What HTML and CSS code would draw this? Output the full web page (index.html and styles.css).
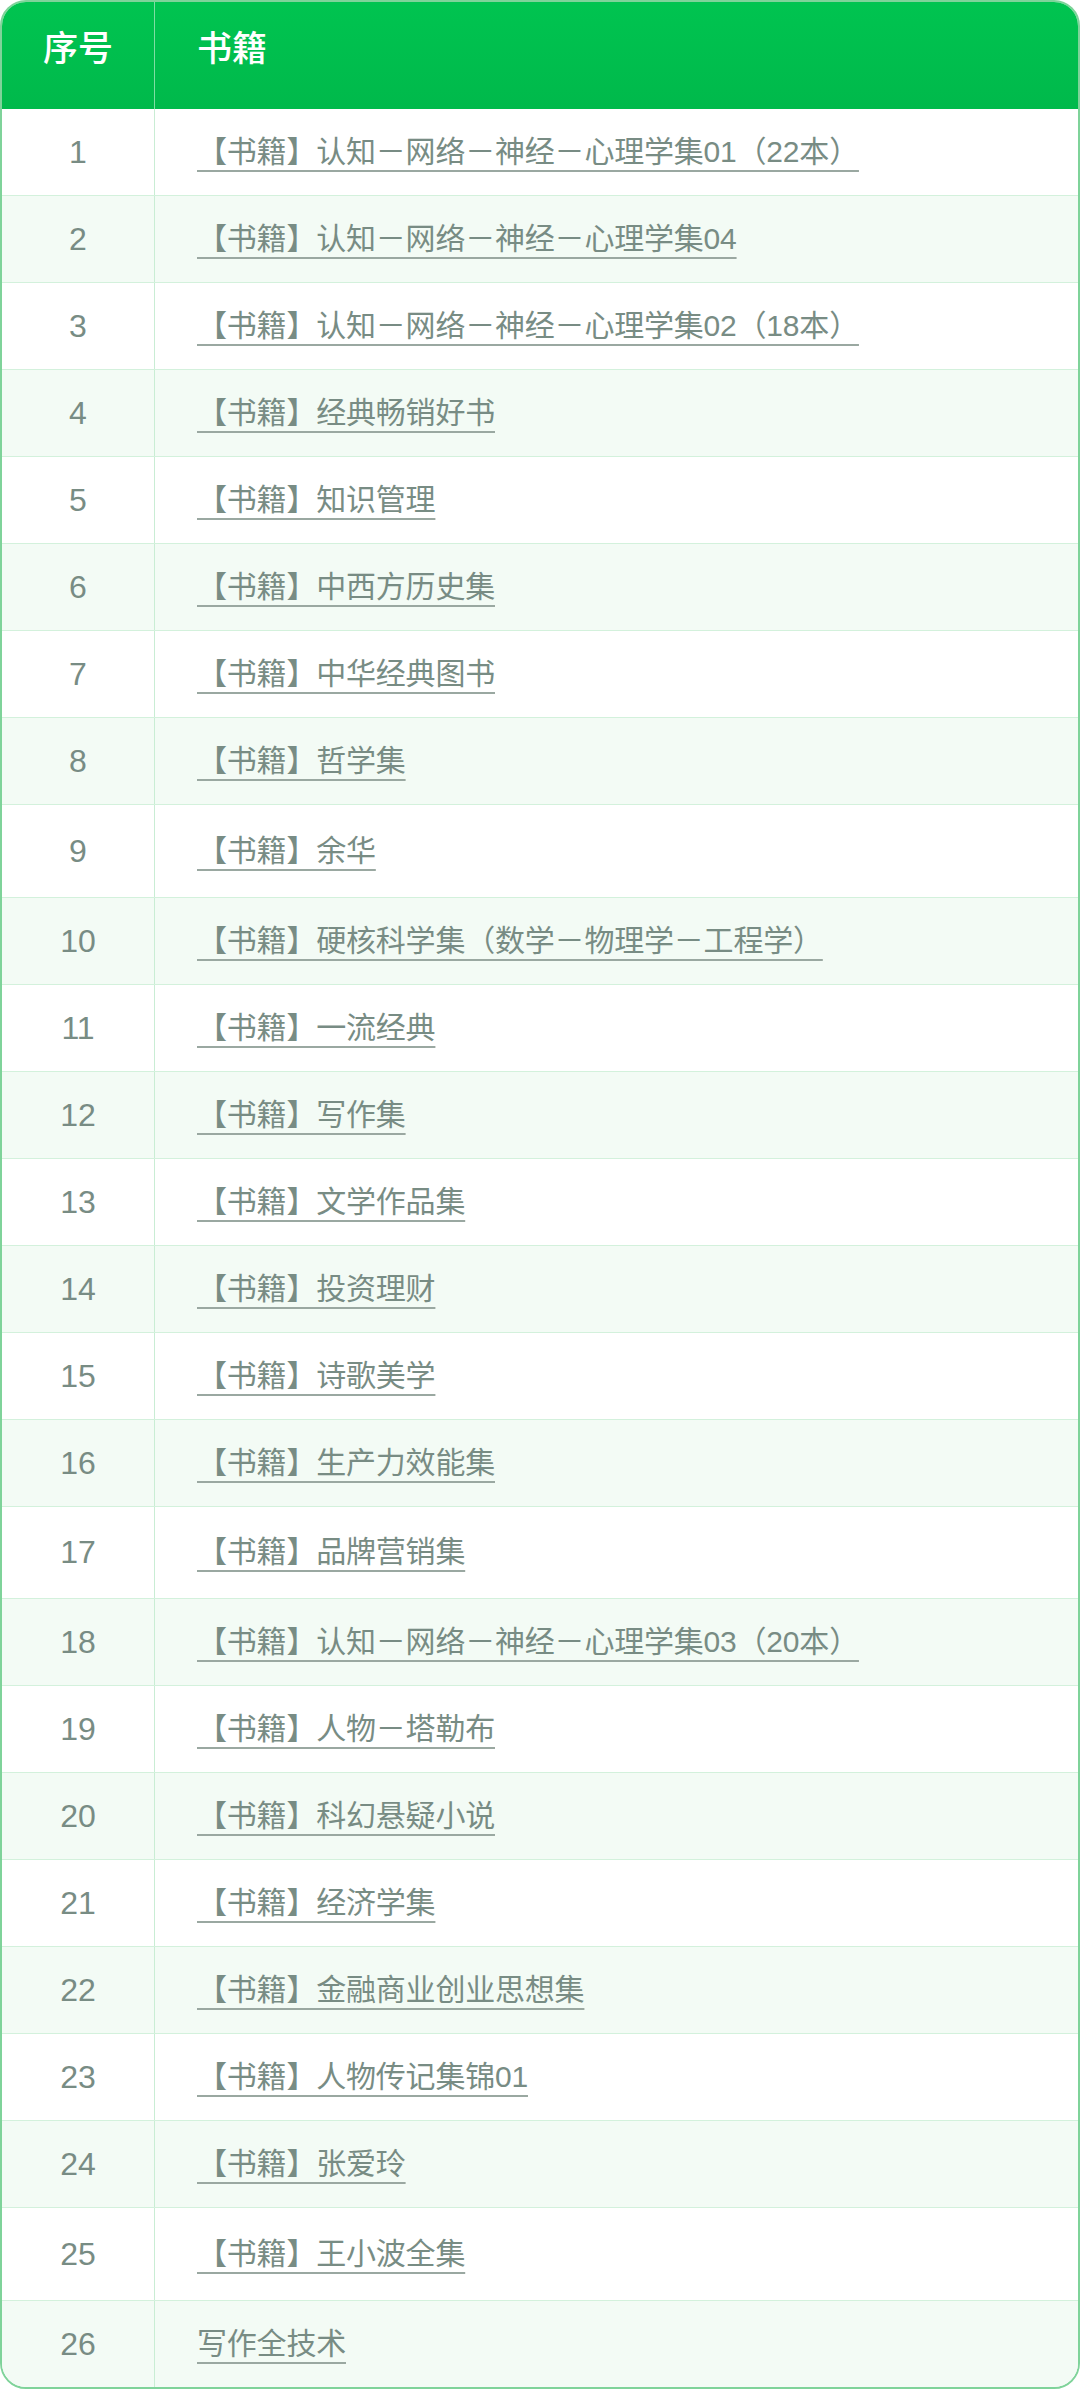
FILE: index.html
```html
<!DOCTYPE html>
<html lang="zh-CN">
<head>
<meta charset="utf-8">
<title>书籍</title>
<link rel="stylesheet" href="styles.css">
</head>
<body>
<div class="table">
  <div class="head">
    <div class="cell num">序号</div>
    <div class="cell name">书籍</div>
  </div>
  <div class="row"><div class="cell num">1</div><div class="cell name"><a href="#">【书籍】认知－网络－神经－心理学集01（22本）</a></div></div>
  <div class="row"><div class="cell num">2</div><div class="cell name"><a href="#">【书籍】认知－网络－神经－心理学集04</a></div></div>
  <div class="row"><div class="cell num">3</div><div class="cell name"><a href="#">【书籍】认知－网络－神经－心理学集02（18本）</a></div></div>
  <div class="row"><div class="cell num">4</div><div class="cell name"><a href="#">【书籍】经典畅销好书</a></div></div>
  <div class="row"><div class="cell num">5</div><div class="cell name"><a href="#">【书籍】知识管理</a></div></div>
  <div class="row"><div class="cell num">6</div><div class="cell name"><a href="#">【书籍】中西方历史集</a></div></div>
  <div class="row"><div class="cell num">7</div><div class="cell name"><a href="#">【书籍】中华经典图书</a></div></div>
  <div class="row"><div class="cell num">8</div><div class="cell name"><a href="#">【书籍】哲学集</a></div></div>
  <div class="row tall"><div class="cell num">9</div><div class="cell name"><a href="#">【书籍】余华</a></div></div>
  <div class="row"><div class="cell num">10</div><div class="cell name"><a href="#">【书籍】硬核科学集（数学－物理学－工程学）</a></div></div>
  <div class="row"><div class="cell num">11</div><div class="cell name"><a href="#">【书籍】一流经典</a></div></div>
  <div class="row"><div class="cell num">12</div><div class="cell name"><a href="#">【书籍】写作集</a></div></div>
  <div class="row"><div class="cell num">13</div><div class="cell name"><a href="#">【书籍】文学作品集</a></div></div>
  <div class="row"><div class="cell num">14</div><div class="cell name"><a href="#">【书籍】投资理财</a></div></div>
  <div class="row"><div class="cell num">15</div><div class="cell name"><a href="#">【书籍】诗歌美学</a></div></div>
  <div class="row"><div class="cell num">16</div><div class="cell name"><a href="#">【书籍】生产力效能集</a></div></div>
  <div class="row tall"><div class="cell num">17</div><div class="cell name"><a href="#">【书籍】品牌营销集</a></div></div>
  <div class="row"><div class="cell num">18</div><div class="cell name"><a href="#">【书籍】认知－网络－神经－心理学集03（20本）</a></div></div>
  <div class="row"><div class="cell num">19</div><div class="cell name"><a href="#">【书籍】人物－塔勒布</a></div></div>
  <div class="row"><div class="cell num">20</div><div class="cell name"><a href="#">【书籍】科幻悬疑小说</a></div></div>
  <div class="row"><div class="cell num">21</div><div class="cell name"><a href="#">【书籍】经济学集</a></div></div>
  <div class="row"><div class="cell num">22</div><div class="cell name"><a href="#">【书籍】金融商业创业思想集</a></div></div>
  <div class="row"><div class="cell num">23</div><div class="cell name"><a href="#">【书籍】人物传记集锦01</a></div></div>
  <div class="row"><div class="cell num">24</div><div class="cell name"><a href="#">【书籍】张爱玲</a></div></div>
  <div class="row tall"><div class="cell num">25</div><div class="cell name"><a href="#">【书籍】王小波全集</a></div></div>
  <div class="row"><div class="cell num">26</div><div class="cell name"><a href="#">写作全技术</a></div></div>
</div>
</body>
</html>
```
FILE: styles.css
```css
* { box-sizing: border-box; }

html, body {
  margin: 0;
  padding: 0;
  background: #ffffff;
}

body {
  font-family: "Liberation Sans", "Noto Sans CJK SC", sans-serif;
  width: 1080px;
}

.table {
  width: 1080px;
  border: 2px solid #7fd39a;
  border-radius: 26px;
  overflow: hidden;
  background: #ffffff;
}

.head {
  display: flex;
  height: 107px;
  background: linear-gradient(#00c450, #00b94b);
  color: #ffffff;
  font-family: "Noto Sans CJK SC", sans-serif;
  font-weight: 500;
  font-size: 35px;
}

.head .cell {
  align-items: flex-start;
  padding-top: 23px;
  line-height: 42px;
}

.head .num {
  border-right-color: #7fdda3;
}

.row {
  display: flex;
  height: 87px;
  border-top: 1.5px solid #d3f1dc;
  color: #788c84;
  font-size: 30px;
  line-height: 40px;
}

.head + .row {
  height: 86px;
  border-top: none;
}

.row:nth-child(odd) {
  background: #f3fbf5;
}

.row.tall {
  height: 92.5px;
}

.cell {
  display: flex;
  align-items: center;
}

.num {
  width: 153px;
  flex: none;
  justify-content: center;
  border-right: 1.5px solid #c9edd4;
}

.row .num {
  font-size: 32px;
}

.name {
  flex: 1;
  padding-left: 42px;
}

.name a {
  color: #788c84;
  text-decoration: underline;
  text-decoration-color: #9aa8a1;
  text-decoration-thickness: 2px;
  text-underline-offset: 8px;
  letter-spacing: -0.2px;
}
```
